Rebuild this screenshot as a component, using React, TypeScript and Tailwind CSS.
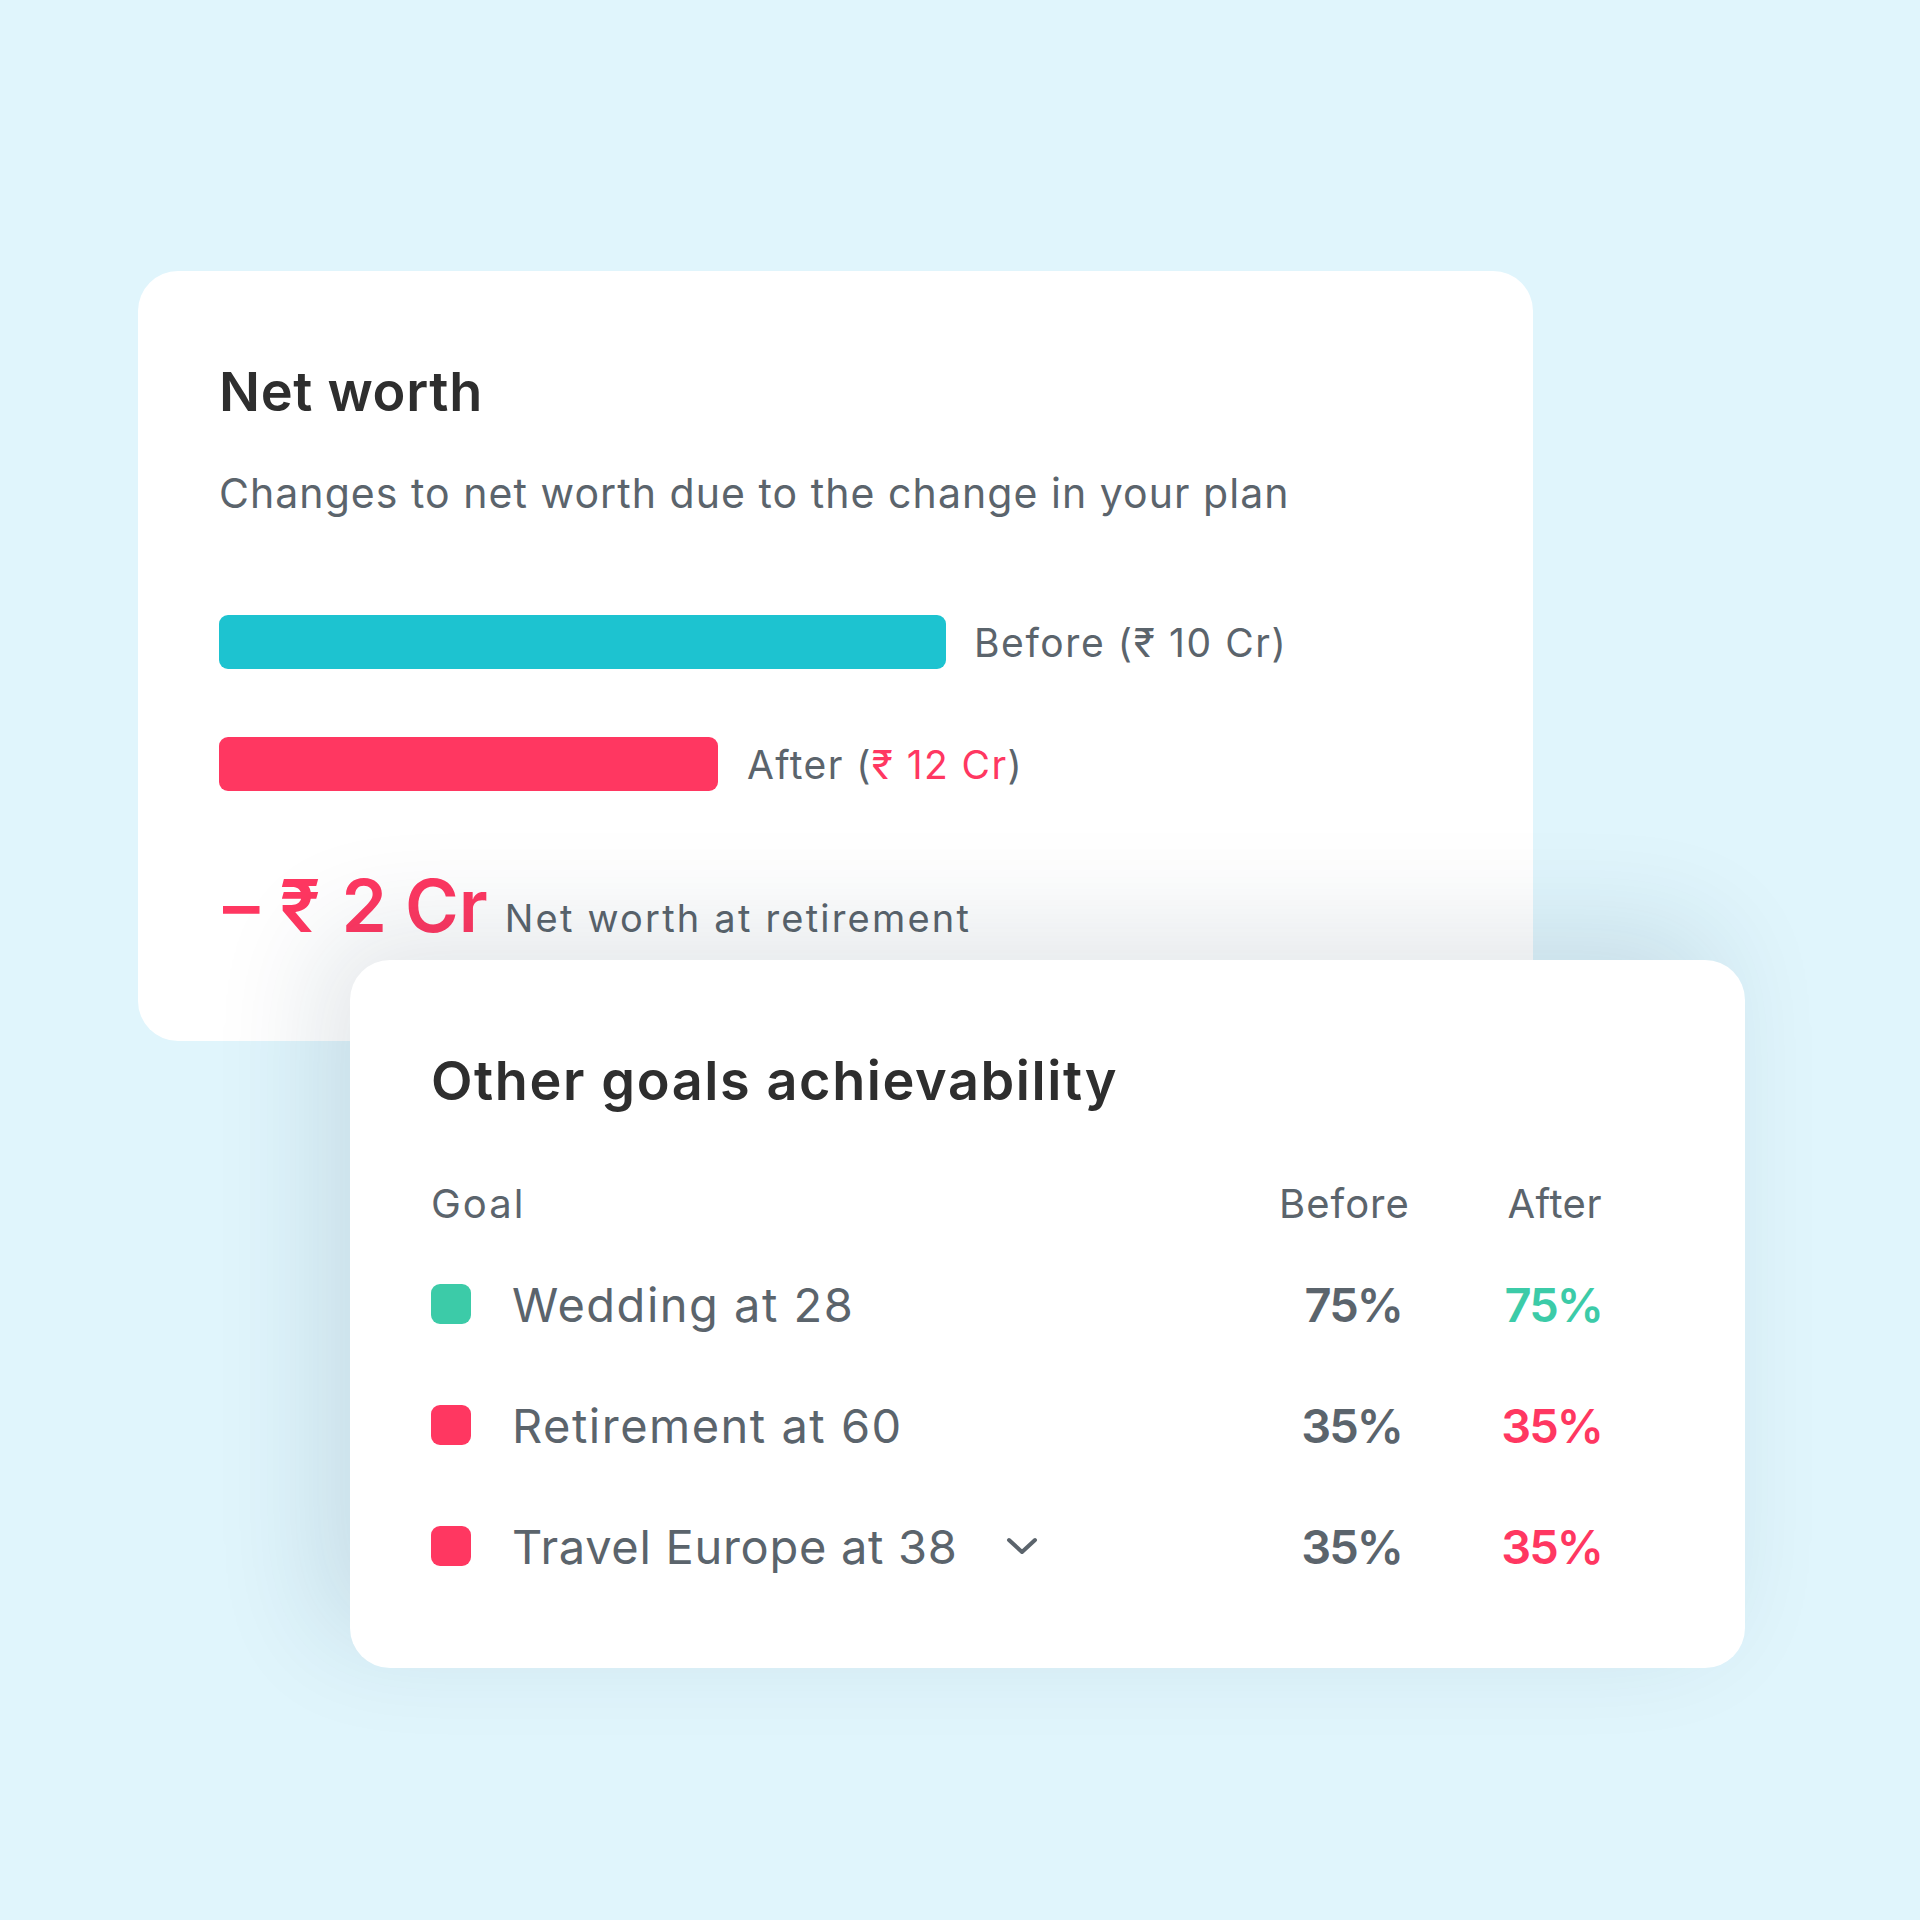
import React from "react";

const Chevron = () => (
  <svg width="32" height="18" viewBox="0 0 32 18" fill="none">
    <polyline points="3,3 16,15 29,3" stroke="#5b646c" strokeWidth="4" strokeLinecap="round" strokeLinejoin="round" />
  </svg>
);

type Row = { label: string; color: string; before: string; after: string; afterColor: string; track: string; chevron?: boolean };

const rows: Row[] = [
  { label: "Wedding at 28", color: "bg-[#3ccba8]", before: "75%", after: "75%", afterColor: "text-[#3ccba8]", track: "tracking-[1.5px]" },
  { label: "Retirement at 60", color: "bg-[#ff3761]", before: "35%", after: "35%", afterColor: "text-[#ff3761]", track: "tracking-[1.5px]" },
  { label: "Travel Europe at 38", color: "bg-[#ff3761]", before: "35%", after: "35%", afterColor: "text-[#ff3761]", track: "tracking-[0.7px]", chevron: true },
];

export default function App() {
  return (
    <div className="w-[1920px] h-[1920px] bg-[#e0f5fc] pt-[271px] pl-[138px] font-['Inter','Noto_Sans',sans-serif]">
      {/* Card 1 */}
      <div className="w-[1395px] h-[770px] bg-white rounded-[40px] pt-[94px] pl-[81px] flex flex-col">
        <div className="text-[54px] leading-none font-semibold text-[#2e2e2e] tracking-[0.7px]">Net worth</div>
        <div className="mt-[54px] text-[41px] leading-none text-[#5b646c] tracking-[1.05px]">
          Changes to net worth due to the change in your plan
        </div>
        <div className="mt-[101px] flex items-center h-[54px]">
          <div className="w-[727px] h-[54px] rounded-[9px] bg-[#1dc3d0]" />
          <div className="ml-[28px] text-[39px] leading-none text-[#5b646c] tracking-[1.6px]">Before (₹ 10 Cr)</div>
        </div>
        <div className="mt-[68px] flex items-center h-[54px]">
          <div className="w-[499px] h-[54px] rounded-[9px] bg-[#ff3761]" />
          <div className="ml-[29px] text-[39px] leading-none text-[#5b646c] tracking-[1.4px]">
            After (<span className="text-[#ff3761]">₹ 12 Cr</span>)
          </div>
        </div>
        <div className="mt-[78px] flex items-baseline">
          <span className="text-[73px] leading-none font-semibold text-[#ff3761] pl-[4px]">
            <span>–</span>
            <span className="ml-[20px]">₹</span>
            <span className="ml-[21px]">2</span>
            <span className="ml-[18px]">Cr</span>
          </span>
          <span className="ml-[17px] text-[38px] leading-none text-[#5b646c] tracking-[2.2px]">Net worth at retirement</span>
        </div>
      </div>

      {/* Card 2 */}
      <div className="relative z-10 ml-[212px] -mt-[81px] w-[1395px] h-[708px] bg-white rounded-[40px] pt-[94px] pl-[81px] pr-[143px] shadow-[-30px_-30px_110px_rgba(20,50,70,0.12)]">
        <div className="text-[54px] leading-none font-semibold text-[#2e2e2e] tracking-[1.6px]">Other goals achievability</div>
        <div className="mt-[76px] grid grid-cols-[1fr_142px_181px] text-[40px] leading-none text-[#5b646c]">
          <div className="tracking-[2px]">Goal</div>
          <div className="tracking-[1px]">Before</div>
          <div className="text-right tracking-[0.5px]">After</div>
        </div>
        <div className="mt-[50px] flex flex-col gap-[61px]">
          {rows.map((r) => (
            <div key={r.label} className="grid grid-cols-[1fr_142px_181px] items-center h-[60px]">
              <div className="flex items-center">
                <div className={`w-[40px] h-[40px] rounded-[9px] ${r.color}`} />
                <span className={`ml-[41px] text-[47px] leading-none text-[#5b646c] ${r.track}`}>{r.label}</span>
                {r.chevron && (
                  <span className="ml-[48px] flex items-center">
                    <Chevron />
                  </span>
                )}
              </div>
              <div className="text-right pr-[19px] text-[47px] leading-none font-semibold text-[#5b646c] tracking-[-2px]">{r.before}</div>
              <div className={`text-right text-[47px] leading-none font-semibold tracking-[-2px] ${r.afterColor}`}>{r.after}</div>
            </div>
          ))}
        </div>
      </div>
    </div>
  );
}
